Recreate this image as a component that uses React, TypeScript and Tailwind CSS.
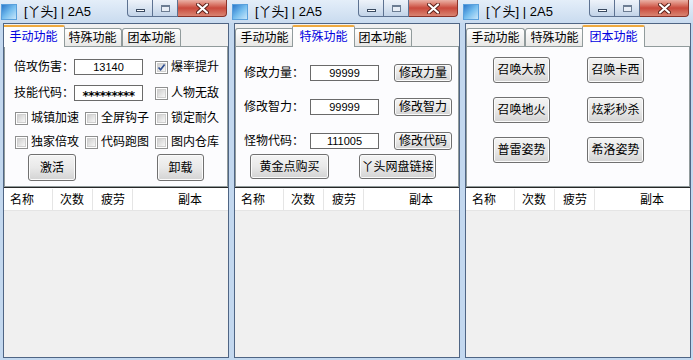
import type { ReactNode } from 'react';

const TABS = ['手动功能', '特殊功能', '团本功能'];

function CaptionButtons() {
  return (
    <div className="mr-[4px] flex self-start">
      <div className="flex h-[17px] w-[26px] items-end justify-center rounded-bl-[4px] border border-t-0 border-[#5d7291] bg-gradient-to-b from-[#eef3fa] via-[#d9e4f1] to-[#c2d3e8] pb-[4px]">
        <div className="h-[3px] w-[9px] border border-[#3a4a60] bg-white" />
      </div>
      <div className="flex h-[17px] w-[25px] items-center justify-center border-b border-r border-[#5d7291] bg-gradient-to-b from-[#eef3fa] via-[#d9e4f1] to-[#c2d3e8]">
        <div className="h-[7px] w-[9px] border border-[#6c7d93] border-t-2 bg-[#e8eef6]" />
      </div>
      <div className="flex h-[17px] w-[49px] items-center justify-center rounded-br-[4px] border-b border-r border-[#8a3329] bg-gradient-to-b from-[#eab1a6] via-[#c9493c] to-[#d98472]">
        <svg width="13" height="11" viewBox="0 0 13 11">
          <path d="M2 1.5 L11 9.5 M11 1.5 L2 9.5" stroke="#5a1f18" strokeWidth="4" strokeLinecap="round" />
          <path d="M2 1.5 L11 9.5 M11 1.5 L2 9.5" stroke="#ffffff" strokeWidth="2.2" strokeLinecap="round" />
        </svg>
      </div>
    </div>
  );
}

function TitleBar() {
  return (
    <div className="flex h-[23px] items-center bg-gradient-to-b from-[#e4eef9] to-[#c9dbef]">
      <div className="ml-[1px] h-[16px] w-[16px] bg-gradient-to-br from-[#1f6fc6] via-[#74bdee] to-[#d3ecfb] shadow-[inset_0_0_0_1px_#5aa0dc]" />
      <span className="ml-[7px] text-[13px] text-black">[丫头] | 2A5</span>
      <div className="ml-auto self-start">
        <CaptionButtons />
      </div>
    </div>
  );
}

function TabStrip({ active }: { active: number }) {
  return (
    <div className="flex h-[21px] items-end">
      {TABS.map((t, i) =>
        i === active ? (
          <div
            key={t}
            className="relative z-10 -mx-[2px] -mb-[1px] flex h-[22px] w-[63px] items-center justify-center rounded-t-[2px] border border-b-0 border-[#919b9c] border-t-2 border-t-[#eea93f] bg-[#fdfdfd] text-[#0000e0]"
          >
            {t}
          </div>
        ) : (
          <div
            key={t}
            className="flex h-[18px] w-[59px] items-center justify-center rounded-t-[3px] border border-b-0 border-[#919b9c] bg-gradient-to-b from-white to-[#e8e8e6] text-black"
          >
            {t}
          </div>
        ),
      )}
    </div>
  );
}

function Check({ label, checked }: { label: string; checked?: boolean }) {
  return (
    <div className="flex items-center gap-[3px]">
      <div className="flex h-[13px] w-[13px] items-center justify-center border border-[#8e8f8f] bg-white">
        <div className="relative h-[9px] w-[9px] border border-[#d0d0d0] bg-gradient-to-br from-[#cfcfcf] to-[#f7f7f7]">
          {checked && (
            <svg className="absolute -left-[1px] -top-[1px]" width="9" height="9" viewBox="0 0 9 9">
              <path d="M1.5 4.5 L3.6 6.8 L7.6 1.6" fill="none" stroke="#2f4f92" strokeWidth="1.7" />
            </svg>
          )}
        </div>
      </div>
      <span>{label}</span>
    </div>
  );
}

function Field({ children, className = '' }: { children: ReactNode; className?: string }) {
  return (
    <div className={`flex h-[16px] w-[69px] items-center justify-center border border-[#6a6a6a] bg-white text-[11px] ${className}`}>
      {children}
    </div>
  );
}

function Btn({ children, className = '' }: { children: ReactNode; className?: string }) {
  return (
    <div
      className={`flex items-center justify-center rounded-[3px] border border-[#707070] bg-gradient-to-b from-[#f4f4f4] via-[#e9e9e9] to-[#d3d3d3] shadow-[inset_0_0_0_1px_#fbfbfb] ${className}`}
    >
      {children}
    </div>
  );
}

function ListView() {
  return (
    <div className="flex flex-1 flex-col border-t border-[#262626] bg-[#f0f0f0]">
      <div className="flex h-[23px] items-center border-b border-[#e5e5e5] bg-white pt-[1px]">
        <div className="flex h-full w-[49px] shrink-0 items-center border-r border-[#e5e5e5] pl-[6px]">名称</div>
        <div className="flex h-full w-[40px] shrink-0 items-center border-r border-[#e5e5e5] pl-[7px]">次数</div>
        <div className="flex h-full w-[40px] shrink-0 items-center border-r border-[#e5e5e5] pl-[8px]">疲劳</div>
        <div className="flex h-full w-[114px] shrink-0 items-center justify-center">副本</div>
      </div>
    </div>
  );
}

function Win({ active, children }: { active: number; children: ReactNode }) {
  return (
    <div className="flex h-[360px] w-[231px] shrink-0 flex-col bg-[#c3d8ef]">
      <TitleBar />
      <div className="ml-[3px] mr-[2px] mb-[2px] flex flex-1 flex-col overflow-hidden border border-[#4f6584] bg-[#f0f0f0]">
        <div className="pt-[1px]">
          <TabStrip active={active} />
        </div>
        <div className="h-[141px] border border-[#919b9c] bg-[#fcfcfe]">{children}</div>
        <ListView />
      </div>
    </div>
  );
}

function ManualPage() {
  return (
    <div className="flex flex-col pt-[12px]">
      <div className="flex h-[16px] items-center">
        <span className="ml-[9px] w-[60px]">倍攻伤害：</span>
        <Field>13140</Field>
        <div className="ml-[12px]">
          <Check label="爆率提升" checked />
        </div>
      </div>
      <div className="mt-[10px] flex h-[16px] items-center">
        <span className="ml-[9px] w-[60px]">技能代码：</span>
        <Field className="pt-[5px] font-['DejaVu_Sans',sans-serif] text-[12px] font-bold tracking-[-0.5px]">*********</Field>
        <div className="ml-[12px]">
          <Check label="人物无敌" />
        </div>
      </div>
      <div className="mt-[9px] flex h-[16px] items-center pl-[10px]">
        <div className="w-[70px]">
          <Check label="城镇加速" />
        </div>
        <div className="w-[70px]">
          <Check label="全屏钩子" />
        </div>
        <div className="w-[70px]">
          <Check label="锁定耐久" />
        </div>
      </div>
      <div className="mt-[8px] flex h-[16px] items-center pl-[10px]">
        <div className="w-[70px]">
          <Check label="独家倍攻" />
        </div>
        <div className="w-[70px]">
          <Check label="代码跑图" />
        </div>
        <div className="w-[70px]">
          <Check label="图内仓库" />
        </div>
      </div>
      <div className="mt-[4px] flex">
        <Btn className="ml-[23px] h-[27px] w-[48px]">激活</Btn>
        <Btn className="ml-[81px] h-[27px] w-[47px]">卸载</Btn>
      </div>
    </div>
  );
}

function SpecialRow({ label, value, action, className = '' }: { label: string; value: string; action: string; className?: string }) {
  return (
    <div className={`flex h-[18px] items-center ${className}`}>
      <span className="ml-[8px] w-[66px]">{label}</span>
      <Field>{value}</Field>
      <Btn className="ml-[15px] h-[18px] w-[58px]">{action}</Btn>
    </div>
  );
}

function SpecialPage() {
  return (
    <div className="flex flex-col pt-[17px]">
      <SpecialRow label="修改力量：" value="99999" action="修改力量" />
      <SpecialRow label="修改智力：" value="99999" action="修改智力" className="mt-[16px]" />
      <SpecialRow label="怪物代码：" value="111005" action="修改代码" className="mt-[16px]" />
      <div className="mt-[4px] flex">
        <Btn className="ml-[14px] h-[25px] w-[79px]">黄金点购买</Btn>
        <Btn className="ml-[30px] h-[25px] w-[77px]">丫头网盘链接</Btn>
      </div>
    </div>
  );
}

const RAID = ['召唤大叔', '召唤卡西', '召唤地火', '炫彩秒杀', '普雷姿势', '希洛姿势'];

function RaidPage() {
  return (
    <div className="grid grid-cols-[57px_57px] gap-x-[37px] gap-y-[14px] pl-[26px] pt-[10px]">
      {RAID.map((r) => (
        <Btn key={r} className="h-[26px] w-[57px]">
          {r}
        </Btn>
      ))}
    </div>
  );
}

export default function App() {
  return (
    <div className="flex h-[360px] w-[693px] overflow-hidden font-['Liberation_Sans','Noto_Sans_CJK_SC',sans-serif] text-[12px] leading-none text-black">
      <Win active={0}>
        <ManualPage />
      </Win>
      <Win active={1}>
        <SpecialPage />
      </Win>
      <Win active={2}>
        <RaidPage />
      </Win>
    </div>
  );
}
